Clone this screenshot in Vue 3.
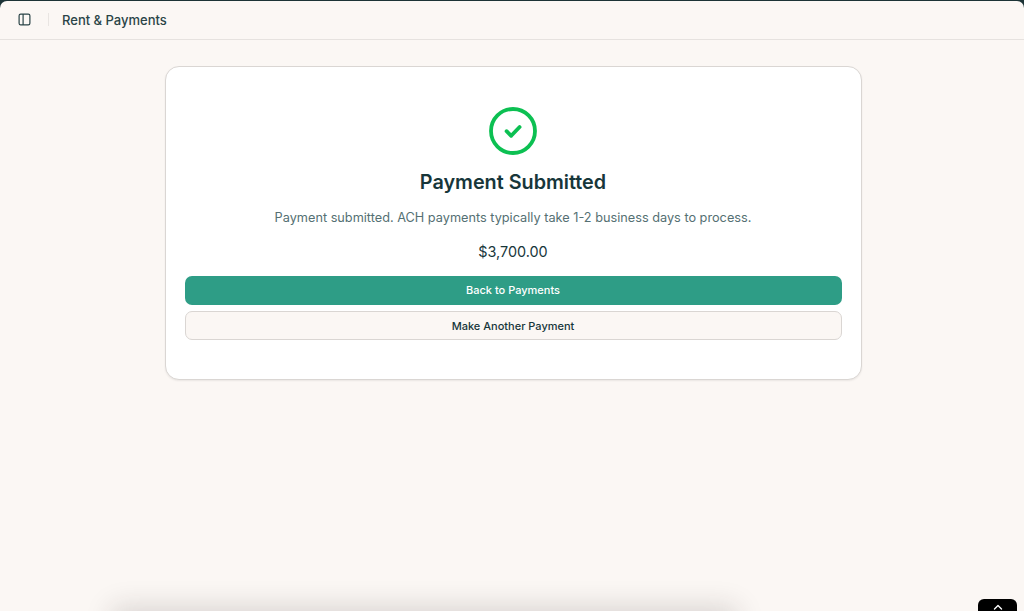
<script setup>
const amount = '$3,700.00'
</script>

<template>
  <div class="frame">
    <div class="shell">
      <header class="topbar">
        <svg class="panel-icon" width="14" height="14" viewBox="0 0 14 14" fill="none" stroke="#2a4447" stroke-width="1.2">
          <rect x="1.1" y="1.1" width="10.8" height="10.8" rx="1.6" />
          <path d="M5.1 1.1v10.8" />
        </svg>
        <span class="divider"></span>
        <span class="crumb">Rent &amp; Payments</span>
      </header>
      <main class="content">
        <section class="card">
          <svg class="check" width="48" height="48" viewBox="0 0 48 48" fill="none" stroke="#0cc052">
            <circle cx="24" cy="24" r="22" stroke-width="3.8" />
            <path d="M17.6 24.2l4.6 4.6 8.4-8.8" stroke-width="3.8" stroke-linecap="round" stroke-linejoin="round" />
          </svg>
          <h1>Payment Submitted</h1>
          <p class="msg">Payment submitted. ACH payments typically take 1-2 business days to process.</p>
          <p class="amount">{{ amount }}</p>
          <button class="btn primary">Back to Payments</button>
          <button class="btn secondary">Make Another Payment</button>
        </section>
      </main>
    </div>
    <div class="glow"></div>
    <div class="tab">
      <svg width="10" height="6" viewBox="0 0 10 6" fill="none" stroke="#fff" stroke-width="1.4" stroke-linecap="round" stroke-linejoin="round">
        <path d="M1.5 5L5 1.6 8.5 5" />
      </svg>
    </div>
  </div>
</template>

<style>
html, body { margin: 0; background: #1c3336; }
</style>

<style scoped>
.frame {
  position: relative;
  width: 1024px;
  height: 611px;
  overflow: hidden;
  background: #1c3336;
  font-family: Inter, "Liberation Sans", sans-serif;
  color: #1c3336;
}
.shell {
  margin-top: 1px;
  height: 610px;
  background: #fbf7f4;
  border-radius: 7px 7px 0 0;
  display: flex;
  flex-direction: column;
}
.topbar {
  flex: none;
  display: flex;
  align-items: center;
  padding-left: 18px;
  padding-bottom: 1px;
  height: 37px;
  border-bottom: 1px solid #e6e2df;
}
.panel-icon { flex: none; }
.divider {
  width: 1px;
  height: 13px;
  margin: 0 13px 0 16px;
  background: #e9e5e2;
}
.crumb {
  font-size: 13px;
  font-weight: 500;
  color: #2a4447;
}
.content {
  flex: 1;
  display: flex;
  justify-content: center;
  align-items: flex-start;
  padding-top: 26px;
  padding-left: 2px;
}
.card {
  width: 697px;
  height: 314px;
  box-sizing: border-box;
  background: #fff;
  border: 1px solid #dad6d3;
  border-radius: 14px;
  box-shadow: 0 1px 2px rgba(0, 0, 0, 0.07);
  padding: 40px 19px 0;
  display: flex;
  flex-direction: column;
  align-items: center;
}
.check { flex: none; }
h1 {
  margin: 15px 0 0;
  font-size: 19.8px;
  line-height: 24px;
  font-weight: 600;
  color: #17363a;
}
.msg {
  margin: 14px 0 0;
  font-size: 12.72px;
  line-height: 20px;
  color: #557073;
}
.amount {
  margin: 14px 0 0;
  font-size: 14.4px;
  line-height: 20px;
  font-weight: 400;
  color: #17363a;
}
.btn {
  width: 100%;
  font: inherit;
  font-size: 11px;
  font-weight: 500;
  border-radius: 7px;
  display: block;
  box-sizing: border-box;
  padding: 0;
}
.primary {
  height: 29px;
  margin-top: 14px;
  padding-bottom: 1px;
  background: #2e9d86;
  border: none;
  color: #fff;
}
.secondary {
  height: 29px;
  margin-top: 6px;
  background: #fbf7f4;
  border: 1px solid #dad6d3;
  color: #17363a;
}
.glow {
  position: absolute;
  left: 120px;
  right: 295px;
  bottom: -26px;
  height: 22px;
  box-shadow: 0 0 28px 8px rgba(40, 30, 30, 0.16);
}
.tab {
  position: absolute;
  left: 978px;
  top: 599px;
  width: 39px;
  height: 20px;
  background: #000;
  border-radius: 6px 6px 0 0;
  display: flex;
  justify-content: center;
  padding-top: 5px;
  box-sizing: border-box;
}
.tab svg { display: block; }
</style>
